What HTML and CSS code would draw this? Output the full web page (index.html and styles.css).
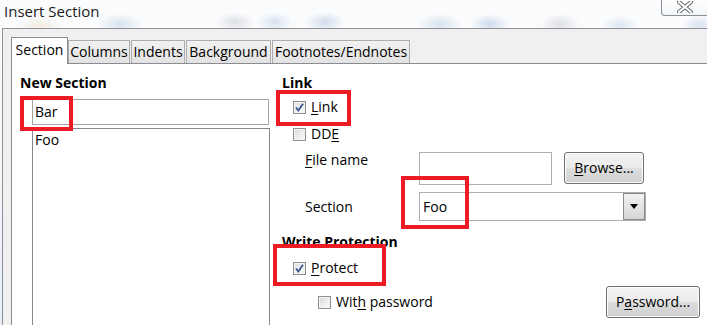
FILE: index.html
```html
<!DOCTYPE html>
<html lang="en">
<head>
    <meta charset="UTF-8">
    <title>Insert Section</title>
    <link rel="stylesheet" href="styles.css">
</head>
<body>

    <div class="window">
        <div class="titlebar">
            <span class="title">Insert Section</span>
            <div class="close-btn">
                <svg width="16" height="12" viewBox="0 0 16 12">
                    <path d="M2 1 L14 11 M14 1 L2 11" stroke="#6b6b6b" stroke-width="4" stroke-linecap="square"/>
                    <path d="M2 1 L14 11 M14 1 L2 11" stroke="#ffffff" stroke-width="2" stroke-linecap="square"/>
                </svg>
            </div>
        </div>

        <div class="dialog">
            <div class="tabs">
                <div class="tab active">Section</div>
                <div class="tab tab-columns">Columns</div>
                <div class="tab tab-indents">Indents</div>
                <div class="tab tab-background">Background</div>
                <div class="tab tab-footnotes">Footnotes/Endnotes</div>
            </div>

            <div class="page">
                <div class="left">
                    <div class="heading">New Section</div>
                    <div class="name-input">Bar</div>
                    <div class="section-list">
                        <div class="list-item">Foo</div>
                    </div>
                </div>

                <div class="right">
                    <div class="heading">Link</div>
                    <div class="check-row row-link">
                        <span class="checkbox checked">
                            <svg width="11" height="11" viewBox="0 0 11 11"><path d="M2 5.5 L4.3 8.5 L9 1.8" fill="none" stroke="#3d5591" stroke-width="1.8"/></svg>
                        </span>
                        <span><u>L</u>ink</span>
                    </div>
                    <div class="check-row row-dde">
                        <span class="checkbox"></span>
                        <span>DD<u>E</u></span>
                    </div>
                    <div class="field-row row-file">
                        <span class="field-label"><u>F</u>ile name</span>
                        <div class="text-input"></div>
                        <div class="button browse-btn"><u>B</u>rowse...</div>
                    </div>
                    <div class="field-row row-section">
                        <span class="field-label">Section</span>
                        <div class="dropdown">
                            <span class="dropdown-value">Foo</span>
                            <span class="dropdown-btn"><span class="arrow"></span></span>
                        </div>
                    </div>
                    <div class="heading heading-protect">Write Protection</div>
                    <div class="check-row row-protect">
                        <span class="checkbox checked">
                            <svg width="11" height="11" viewBox="0 0 11 11"><path d="M2 5.5 L4.3 8.5 L9 1.8" fill="none" stroke="#3d5591" stroke-width="1.8"/></svg>
                        </span>
                        <span><u>P</u>rotect</span>
                    </div>
                    <div class="check-row row-password">
                        <span class="checkbox"></span>
                        <span>Wit<u>h</u> password</span>
                        <div class="button password-btn">P<u>a</u>ssword...</div>
                    </div>
                </div>
            </div>
        </div>

        <!-- annotation boxes drawn over the dialog -->
        <div class="mark mark-bar"></div>
        <div class="mark mark-link"></div>
        <div class="mark mark-foo"></div>
        <div class="mark mark-protect"></div>
    </div>

</body>
</html>
```

FILE: styles.css
```css
body {
    margin: 0;
    padding: 0;
    background-color: #fff;
}

.window {
    position: relative;
    width: 707px;
    height: 325px;
    overflow: hidden;
    font-family: 'Open Sans', sans-serif;
    font-size: 14px;
    line-height: 20px;
    color: #000;
    display: flex;
    flex-direction: column;
    background:
        radial-gradient(ellipse 22px 10px at 40px 26px, rgba(225, 205, 170, 0.35), transparent),
        radial-gradient(ellipse 22px 10px at 120px 24px, rgba(150, 180, 215, 0.35), transparent),
        radial-gradient(ellipse 20px 10px at 235px 22px, rgba(170, 175, 190, 0.35), transparent),
        radial-gradient(ellipse 18px 10px at 275px 22px, rgba(150, 180, 215, 0.35), transparent),
        radial-gradient(ellipse 20px 10px at 325px 22px, rgba(150, 170, 210, 0.4), transparent),
        radial-gradient(ellipse 22px 10px at 440px 24px, rgba(150, 180, 215, 0.35), transparent),
        radial-gradient(ellipse 20px 10px at 490px 24px, rgba(140, 170, 215, 0.4), transparent),
        radial-gradient(ellipse 20px 10px at 560px 24px, rgba(170, 175, 190, 0.35), transparent),
        radial-gradient(ellipse 18px 10px at 620px 25px, rgba(150, 180, 215, 0.3), transparent),
        radial-gradient(ellipse 18px 10px at 700px 25px, rgba(140, 170, 215, 0.3), transparent),
        linear-gradient(to bottom, #fbfcfd 0%, #f4f7fa 55%, #e6eef6 100%);
}

.titlebar {
    height: 28px;
    display: flex;
    align-items: flex-start;
    padding-left: 4px;
    flex-shrink: 0;
}

.title {
    font-size: 15px;
    padding-top: 1px;
    color: #1a1a1a;
}

.close-btn {
    margin-left: auto;
    width: 46px;
    height: 16px;
    border: 1px solid #8d9196;
    border-top: none;
    border-right: none;
    border-radius: 0 0 0 4px;
    background: linear-gradient(to bottom, rgba(255, 255, 255, 0.6), rgba(235, 240, 245, 0.6));
    display: flex;
    justify-content: center;
    padding-top: 1px;
    box-sizing: border-box;
}

.dialog {
    flex: 1;
    margin-left: 2px;
    border-top: 1px solid #8d9196;
    border-left: 1px solid #8d9196;
    background-color: #f0f0f0;
    padding: 8px 0 0 8px;
    display: flex;
    flex-direction: column;
}

.tabs {
    display: flex;
    align-items: flex-end;
    height: 26px;
}

.tab {
    box-sizing: border-box;
    height: 23px;
    border: 1px solid #acacac;
    border-bottom: none;
    background: linear-gradient(to bottom, #f2f2f2, #e2e2e2);
    text-align: center;
    line-height: 21px;
    white-space: nowrap;
}

.tab.active {
    position: relative;
    z-index: 1;
    width: 57px;
    height: 27px;
    margin-bottom: -1px;
    border-color: #898c95;
    background: #fff;
    line-height: 24px;
}

.tab-columns {
    width: 62px;
}

.tab-indents {
    width: 54px;
    margin-left: 1px;
}

.tab-background {
    width: 85px;
    margin-left: 1px;
}

.tab-footnotes {
    width: 138px;
    margin-left: 1px;
}

.page {
    flex: 1;
    border-top: 1px solid #898c95;
    border-left: 1px solid #898c95;
    background-color: #fff;
    padding: 9px 0 0 8px;
    display: flex;
}

.heading {
    font-weight: 700;
}

.left {
    width: 249px;
    display: flex;
    flex-direction: column;
}

.name-input {
    box-sizing: border-box;
    width: 237px;
    height: 26px;
    margin: 6px 0 0 12px;
    border: 1px solid #a5a5a5;
    padding: 2px 0 0 2px;
}

.section-list {
    box-sizing: border-box;
    width: 238px;
    height: 260px;
    margin: 3px 0 0 12px;
    border: 1px solid #828790;
    padding: 1px 0 0 2px;
}

.right {
    width: 418px;
    margin-left: 13px;
    display: flex;
    flex-direction: column;
}

.check-row {
    display: flex;
    align-items: center;
    height: 20px;
    padding-left: 11px;
}

.row-link {
    margin-top: 4px;
}

.row-dde {
    margin-top: 7px;
}

.row-protect {
    margin-top: 6px;
}

.row-password {
    margin-top: 8px;
    height: 32px;
    padding-left: 36px;
}

.checkbox {
    box-sizing: border-box;
    width: 13px;
    height: 13px;
    margin-right: 5px;
    border: 1px solid #8e8f8f;
    background: linear-gradient(135deg, #d6d6d6 0%, #f0f0f0 60%, #fbfbfb 100%);
    box-shadow: inset 0 0 0 1px #f4f4f4;
    display: flex;
    justify-content: center;
    align-items: center;
}

.checkbox.checked {
    background: linear-gradient(135deg, #dadde4 0%, #f2f3f6 70%, #fbfbfb 100%);
}

.field-row {
    display: flex;
    padding-left: 23px;
}

.field-label {
    width: 114px;
    flex-shrink: 0;
}

.row-file {
    margin-top: 6px;
    align-items: flex-start;
}

.text-input {
    box-sizing: border-box;
    width: 133px;
    height: 33px;
    margin-top: 2px;
    border: 1px solid #abadb3;
}

.button {
    box-sizing: border-box;
    height: 32px;
    border: 1px solid #707070;
    border-radius: 3px;
    background: linear-gradient(to bottom, #f2f2f2 0%, #ebebeb 48%, #dddddd 52%, #cfcfcf 100%);
    box-shadow: inset 0 0 0 1px #fcfcfc;
    text-align: center;
    line-height: 29px;
}

.browse-btn {
    width: 80px;
    margin: 2px 0 0 12px;
}

.password-btn {
    width: 94px;
    margin-left: auto;
}

.row-section {
    margin-top: 7px;
    align-items: center;
}

.dropdown {
    box-sizing: border-box;
    width: 227px;
    height: 29px;
    border: 1px solid #abadb3;
    display: flex;
    align-items: center;
}

.dropdown-value {
    flex: 1;
    padding-left: 3px;
}

.dropdown-btn {
    box-sizing: border-box;
    width: 22px;
    height: 27px;
    border: 1px solid #8a8a8a;
    background: linear-gradient(to bottom, #f2f2f2, #d6d6d6);
    display: flex;
    justify-content: center;
    align-items: center;
}

.arrow {
    width: 0;
    height: 0;
    border-left: 4px solid transparent;
    border-right: 4px solid transparent;
    border-top: 5px solid #000;
}

.heading-protect {
    margin-top: 11px;
}

u {
    text-decoration-thickness: 1px;
    text-underline-offset: 2px;
}

.mark {
    position: absolute;
    box-sizing: border-box;
    border: 4px solid #ed1c24;
}

.mark-bar {
    left: 20px;
    top: 96px;
    width: 53px;
    height: 35px;
}

.mark-link {
    left: 276px;
    top: 90px;
    width: 75px;
    height: 36px;
}

.mark-foo {
    left: 401px;
    top: 176px;
    width: 68px;
    height: 53px;
}

.mark-protect {
    left: 273px;
    top: 244px;
    width: 113px;
    height: 42px;
}
```
